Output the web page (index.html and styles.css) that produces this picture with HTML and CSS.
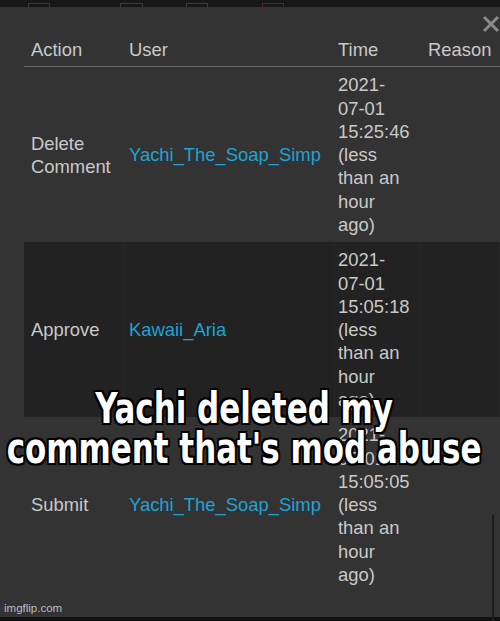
FILE: index.html
```
<!DOCTYPE html>
<html>
<head>
<meta charset="utf-8">
<link rel="stylesheet" href="styles.css">
</head>
<body>
<div class="page">
  <div class="topbar">
    <span class="tab t1"></span>
    <span class="tab t2"></span>
    <span class="tab t3"></span>
    <span class="tab t4"></span>
  </div>
  <div class="modal">
    <svg class="close" width="20" height="18" viewBox="0 0 20 18"><path d="M2 2 L16 16 M16 2 L2 16" stroke="#8a8a8a" stroke-width="3" fill="none"/></svg>
    <div class="table">
      <div class="row head">
        <div class="c1">Action</div>
        <div class="c2">User</div>
        <div class="c3">Time</div>
        <div class="c4">Reason</div>
      </div>
      <div class="row">
        <div class="c1">Delete<br>Comment</div>
        <div class="c2 user">Yachi_The_Soap_Simp</div>
        <div class="c3"><span>2021-<span class="nw">07-01</span> 15:25:46 (less than an hour ago)</span></div>
        <div class="c4"></div>
      </div>
      <div class="row dark">
        <div class="c1">Approve</div>
        <div class="c2 user">Kawaii_Aria</div>
        <div class="c3"><span>2021-<span class="nw">07-01</span> 15:05:18 (less than an hour ago)</span></div>
        <div class="c4"></div>
      </div>
      <div class="row">
        <div class="c1">Submit</div>
        <div class="c2 user">Yachi_The_Soap_Simp</div>
        <div class="c3"><span>2021-<span class="nw">07-01</span> 15:05:05 (less than an hour ago)</span></div>
        <div class="c4"></div>
      </div>
    </div>
    <div class="scroll"></div>
    <div class="caption"><span>Yachi deleted my</span><span>comment that's mod abuse</span></div>
    <div class="wm">imgflip.com</div>
  </div>
  <div class="bottombar"></div>
</div>
</body>
</html>
```
FILE: styles.css
```
html, body {
  margin: 0;
  padding: 0;
  background: #141414;
}
.page {
  width: 500px;
  height: 621px;
  overflow: hidden;
  display: flex;
  flex-direction: column;
  font-family: "Liberation Sans", Arial, sans-serif;
}
.topbar {
  height: 7px;
  background: #171717;
  display: flex;
  align-items: flex-start;
  flex: none;
}
.tab {
  margin-top: 3px;
  height: 8px;
  border: 1px solid #3c3c3c;
  box-sizing: border-box;
}
.t1 { margin-left: 28px; width: 22px; }
.t2 { margin-left: 70px; width: 23px; }
.t3 { margin-left: 43px; width: 22px; }
.t4 { margin-left: 54px; width: 22px; border-color: #6a1f1f; }
.modal {
  position: relative;
  background: #333333;
  height: 610px;
  flex: none;
  padding: 22px 0 0 24px;
  box-sizing: border-box;
}
.close {
  position: absolute;
  left: 482px;
  top: 8px;
}
.table {
  color: #c9c9c9;
  font-size: 18.4px;
  line-height: 23.2px;
}
.row {
  display: grid;
  grid-template-columns: 100px 211px 85px 80px;
  height: 175px;
}
.row > div {
  display: flex;
  align-items: center;
  box-sizing: border-box;
}
.row.head {
  height: auto;
  padding: 9px 0 5px;
  border-bottom: 1.5px solid #6c6c6c;
}
.row.dark {
  background: #222222;
}
.row.dark > div {
  border-right: 1px solid #272727;
}
.c1 { padding-left: 7px; }
.c2 { padding-left: 5px; }
.c3 { padding-left: 3px; padding-right: 6px; }
.c4 { padding-left: 8px; }
.nw { white-space: nowrap; }
.user { color: #1ea3d3; }
.scroll {
  position: absolute;
  left: 492px;
  top: 508px;
  width: 2px;
  height: 110px;
  background: #1c1c1c;
}
.caption {
  position: absolute;
  left: 0;
  top: 381px;
  width: 488px;
  display: flex;
  flex-direction: column;
  align-items: center;
  font-family: "DejaVu Sans Condensed", "DejaVu Sans", sans-serif;
  font-weight: bold;
  font-size: 40px;
  line-height: 40px;
  color: #ffffff;
  text-shadow: -2px -2px 0 #000, 2px -2px 0 #000, -2px 2px 0 #000, 2px 2px 0 #000, 0 2px 0 #000, 0 -2px 0 #000, 2px 0 0 #000, -2px 0 0 #000;
  white-space: nowrap;
}
.caption span {
  display: block;
  transform: scale(0.86, 1.08);
}
.wm {
  position: absolute;
  left: 4px;
  bottom: 3px;
  font-size: 11.5px;
  color: #bdbdbd;
}
.bottombar {
  flex: 1;
  background: #111111;
}
```
